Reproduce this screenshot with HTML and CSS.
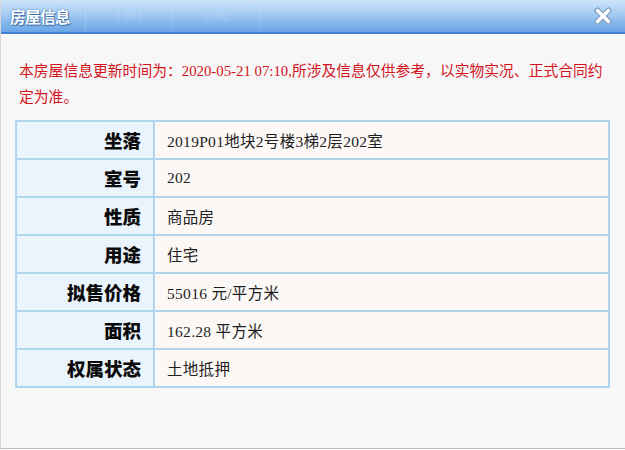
FILE: index.html
```html
<!DOCTYPE html>
<html lang="zh">
<head>
<meta charset="utf-8">
<title>房屋信息</title>
<link rel="stylesheet" href="styles.css">
</head>
<body>
<div class="window">
  <div class="titlebar">
    <div class="title">房屋信息</div>
    <div class="tab">1301</div>
    <div class="tab">1302</div>
    <div class="close">
      <svg width="20" height="20" viewBox="0 0 20 20">
        <path d="M4.5 4.5 L15.5 15.5 M15.5 4.5 L4.5 15.5" stroke="#7f9fc2" stroke-width="6" stroke-linecap="round"/>
        <path d="M4.5 4.5 L15.5 15.5 M15.5 4.5 L4.5 15.5" stroke="#ffffff" stroke-width="3.4" stroke-linecap="round"/>
      </svg>
    </div>
  </div>
  <div class="content">
    <p class="notice">本房屋信息更新时间为：2020-05-21 07:10,所涉及信息仅供参考，以实物实况、正式合同约定为准。</p>
    <table class="info">
      <tr><th>坐落</th><td>2019P01地块2号楼3梯2层202室</td></tr>
      <tr><th>室号</th><td>202</td></tr>
      <tr><th>性质</th><td>商品房</td></tr>
      <tr><th>用途</th><td>住宅</td></tr>
      <tr><th>拟售价格</th><td>55016 元/平方米</td></tr>
      <tr><th>面积</th><td>162.28 平方米</td></tr>
      <tr><th>权属状态</th><td>土地抵押</td></tr>
    </table>
  </div>
</div>
</body>
</html>
```
FILE: styles.css
```css
html, body {
  margin: 0;
  padding: 0;
  background: #f7f7f7;
}
body {
  font-family: "Liberation Serif", "Noto Sans CJK SC", serif;
  width: 625px;
  height: 450px;
  overflow: hidden;
}
.window {
  box-sizing: border-box;
  width: 625px;
  height: 449px;
  border-left: 1px solid #d6d6d6;
  border-bottom: 1px solid #bdbdbd;
  background: #f7f7f7;
}
.titlebar {
  display: flex;
  align-items: center;
  height: 32px;
  background: linear-gradient(to bottom, #cde4f9 0%, #a9cef2 40%, #82b5eb 75%, #6aa4e4 100%);
  border-bottom: 2px solid #3f80d2;
}
.title {
  width: 75px;
  padding-left: 9px;
  font-family: "Noto Sans CJK SC", sans-serif;
  font-size: 15.5px;
  font-weight: bold;
  color: #ffffff;
  letter-spacing: -0.5px;
  text-shadow: 0 0 2px #3a6ea8, 1px 1px 1px #3a6ea8;
  border-right: 1px solid rgba(255,255,255,0.15);
  height: 32px;
  line-height: 32px;
}
.tab {
  width: 86px;
  height: 32px;
  line-height: 34px;
  text-align: center;
  font-family: "Liberation Serif", serif;
  font-size: 14px;
  color: rgba(255,255,255,0.16);
  border-right: 1px solid rgba(255,255,255,0.12);
}
.close {
  margin-left: auto;
  margin-right: 12px;
  width: 20px;
  height: 20px;
}
.close svg { display: block; }
.content {
  padding: 24px 15px 0 14px;
}
.notice {
  margin: 0 0 10px 0;
  padding-left: 4px;
  font-family: "Liberation Serif", "Noto Sans CJK SC", serif;
  font-size: 14.8px;
  line-height: 26px;
  color: #d3141c;
}
.info {
  width: 595px;
  border-collapse: collapse;
  border: 2px solid #b0d6ee;
}
.info th, .info td {
  border: 2px solid #b0d6ee;
  height: 36px;
  padding: 0;
}
.info th {
  width: 124px;
  padding-right: 12px;
  text-align: right;
  background: #eaf4fc;
  font-family: "Noto Sans CJK SC", sans-serif;
  font-size: 18.5px;
  font-weight: 900;
  color: #0a0a0a;
}
.info td {
  padding-left: 12px;
  background: #fbf8f6;
  font-size: 15.5px;
  letter-spacing: 0.3px;
  color: #1e1e1e;
}
```
